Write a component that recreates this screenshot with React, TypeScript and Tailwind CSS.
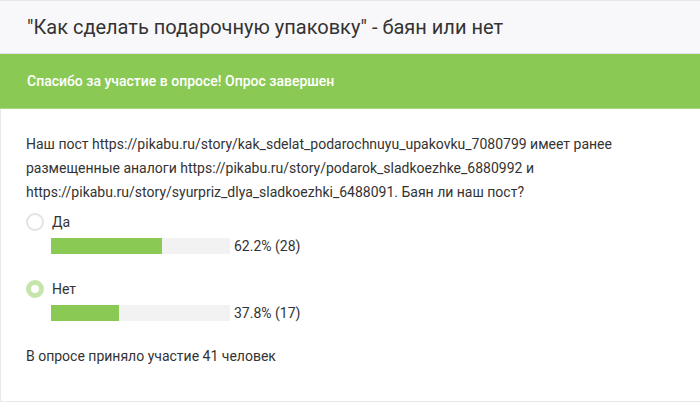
import React from 'react';

interface PollOption {
    label: string,
    percent: number,
    votes: number,
    selected?: boolean
}

const options: PollOption[] = [
    { label: 'Да', percent: 62.2, votes: 28 },
    { label: 'Нет', percent: 37.8, votes: 17, selected: true },
];

const OptionRow: React.FC<PollOption> = (props) => {
    return (
        <div className='flex flex-col'>
            {/* Radio + label */}
            <div className='flex items-center gap-[8px] h-[18px]'>
                {props.selected ? (
                    <span className='w-[18px] h-[18px] rounded-full border-[5px] border-[#c5e5ab] bg-white box-border' />
                ) : (
                    <span className='w-[18px] h-[18px] rounded-full border-2 border-[#e3e3e3] bg-white box-border' />
                )}
                <span className='text-[14px] leading-[18px] text-[#333]'>{props.label}</span>
            </div>

            {/* Result bar */}
            <div className='flex items-center mt-[7px] pl-[25px] gap-[4px]'>
                <div className='w-[179px] h-[16px] bg-[#f2f2f2]'>
                    <div className='h-full bg-[#8bc955]' style={{ width: props.percent + '%' }} />
                </div>
                <span className='text-[14px] leading-[16px] text-[#333]'>{props.percent}% ({props.votes})</span>
            </div>
        </div>
    )
}

export default function App() {
    return (
        <div className="w-[700px] h-[402px] bg-white font-['Roboto',sans-serif] flex flex-col border-t border-b border-[#e8e8e8]">
            {/* Title */}
            <div className='h-[53px] bg-[#f8f8fa] border-b border-[#e2e2e6] px-[27px] flex items-center'>
                <h2 className='text-[20px] text-[#333] leading-none'>"Как сделать подарочную упаковку" - баян или нет</h2>
            </div>

            {/* Finished banner */}
            <div className='h-[55px] bg-[#8bc955] border-b border-[#a9d887] px-[27px] flex items-center'>
                <span className='text-[14px] text-white font-medium'>Спасибо за участие в опросе! Опрос завершен</span>
            </div>

            {/* Body */}
            <div className='flex-1 border-l border-[#e8e8e8] px-[25px] pt-[23px]'>
                <p className='text-[14px] leading-[24px] text-[#333]'>
                    Наш пост https://pikabu.ru/story/kak_sdelat_podarochnuyu_upakovku_7080799 имеет ранее размещенные аналоги https://pikabu.ru/story/podarok_sladkoezhke_6880992 и https://pikabu.ru/story/syurpriz_dlya_sladkoezhki_6488091. Баян ли наш пост?
                </p>

                <div className='flex flex-col gap-[26px] mt-[9px]'>
                    {options.map((o) => (
                        <OptionRow key={o.label} {...o} />
                    ))}
                </div>

                <p className='text-[14px] leading-[20px] text-[#333] mt-[25px]'>В опросе приняло участие 41 человек</p>
            </div>
        </div>
    )
}
